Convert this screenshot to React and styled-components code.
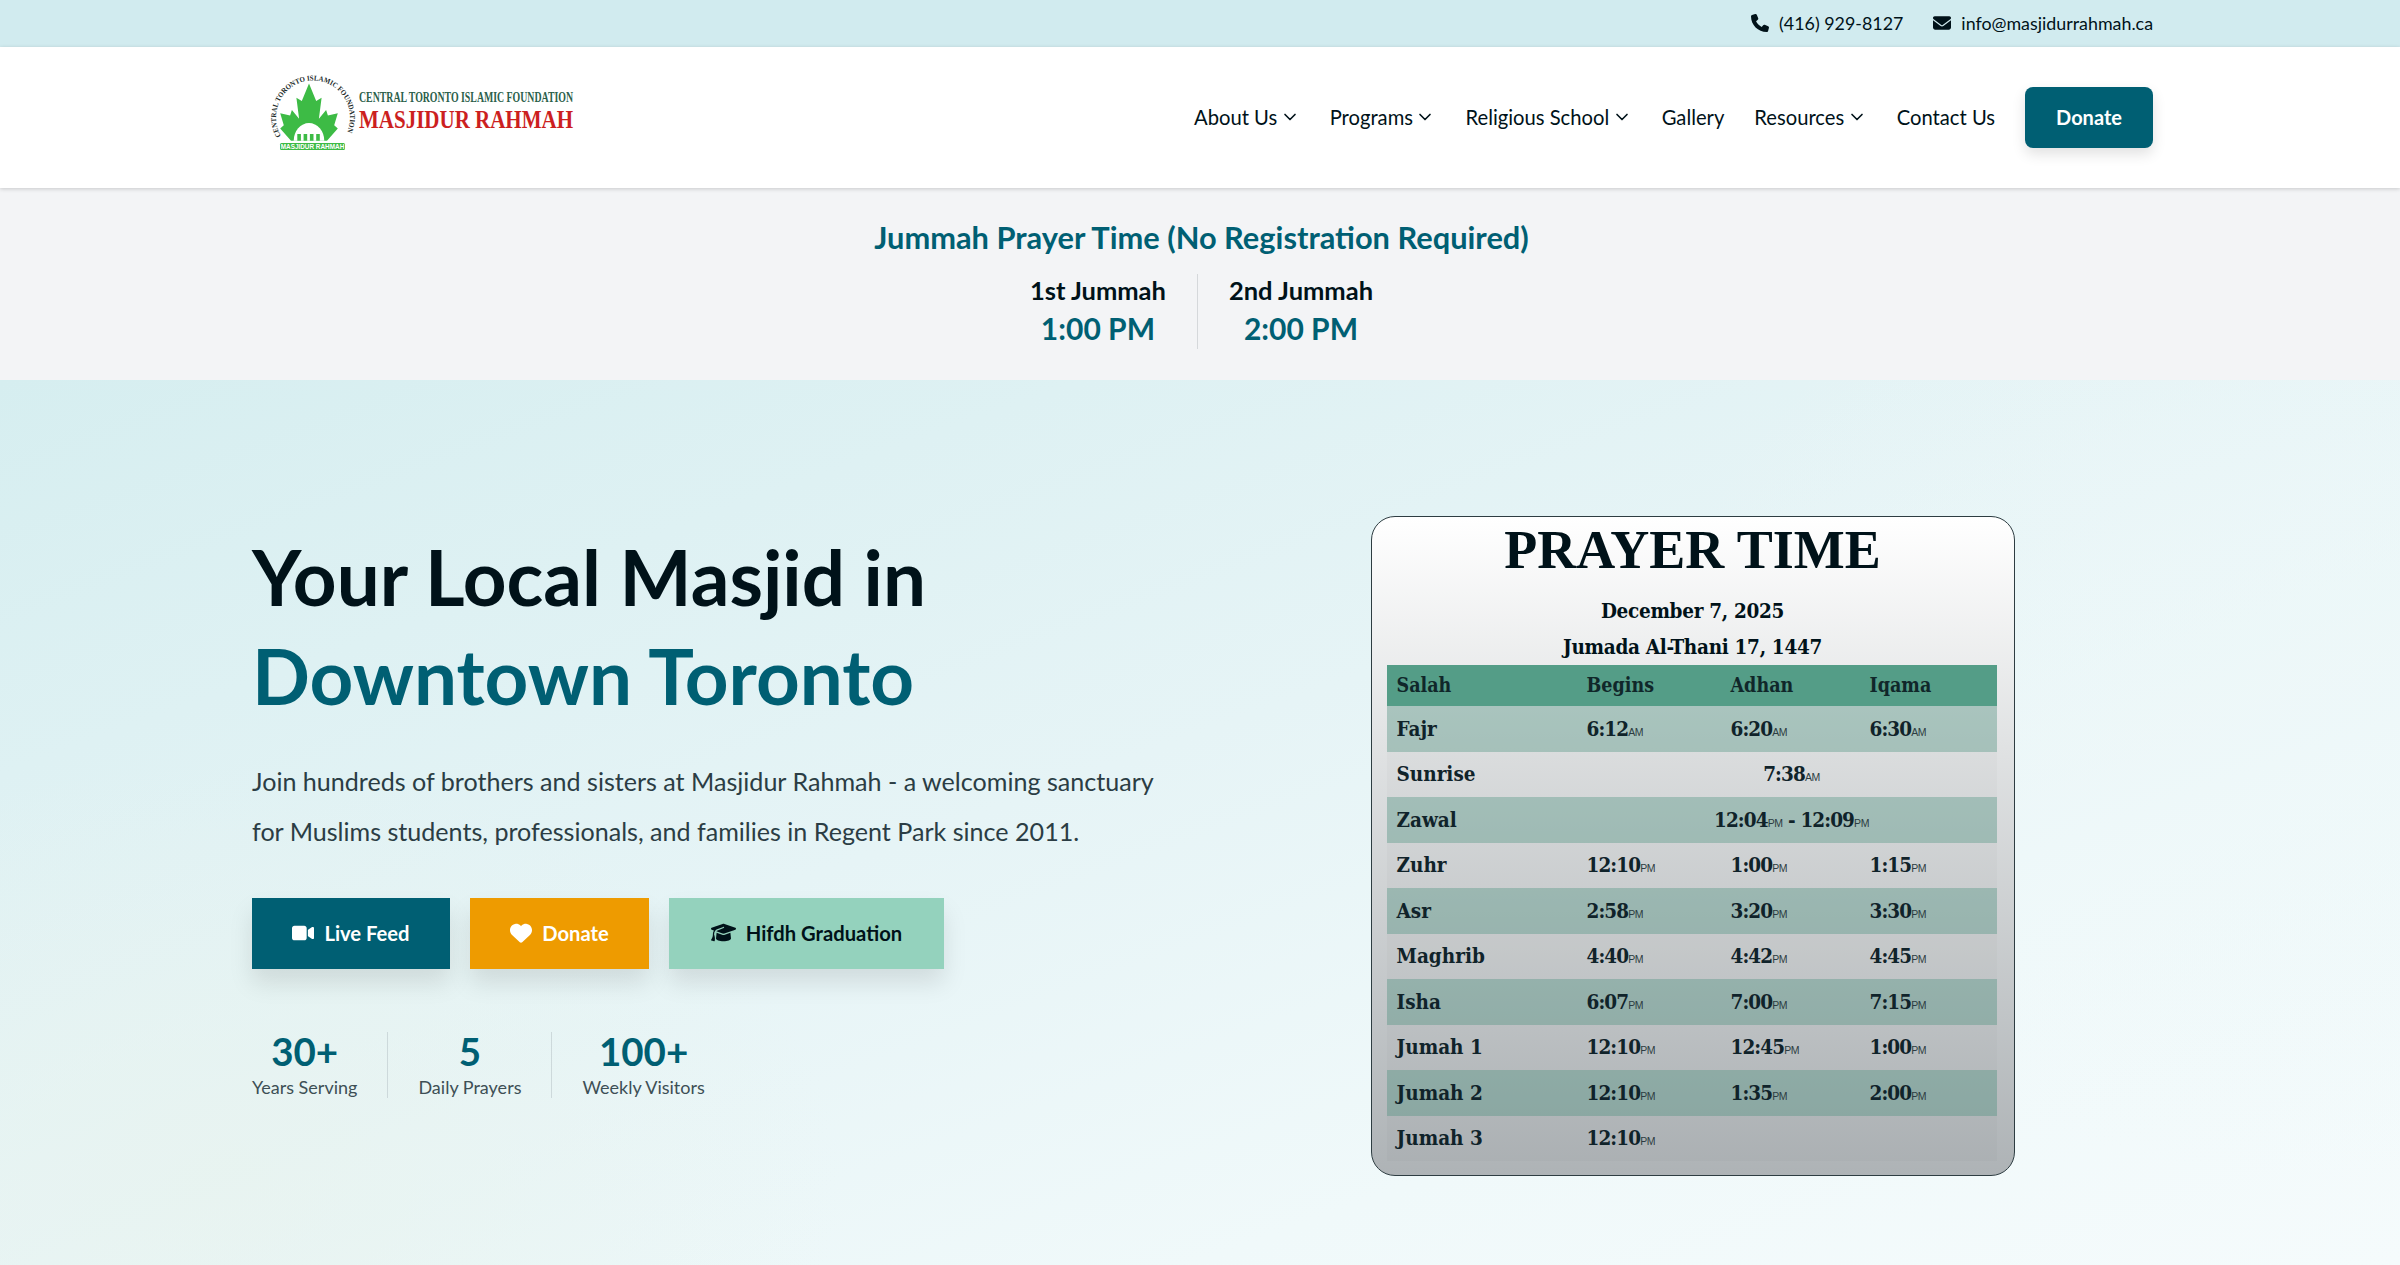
import styled, { createGlobalStyle } from "styled-components"
import { FaPhone, FaEnvelope, FaVideo, FaHeart, FaGraduationCap } from "react-icons/fa6"
import { ChevronDown } from "lucide-react"

const navLinks = [
    { label: "About Us", menu: true },
    { label: "Programs", menu: true },
    { label: "Religious School", menu: true },
    { label: "Gallery" },
    { label: "Resources", menu: true },
    { label: "Contact Us" },
]

const stats = [
    { value: "30+", label: "Years Serving" },
    { value: "5", label: "Daily Prayers" },
    { value: "100+", label: "Weekly Visitors" },
]

const prayers = [
    { name: "Fajr", times: ["6:12", "6:20", "6:30"], suffix: "AM" },
    { name: "Sunrise", span: [["7:38", "AM"]] },
    { name: "Zawal", span: [["12:04", "PM"], [" - 12:09", "PM"]] },
    { name: "Zuhr", times: ["12:10", "1:00", "1:15"], suffix: "PM" },
    { name: "Asr", times: ["2:58", "3:20", "3:30"], suffix: "PM" },
    { name: "Maghrib", times: ["4:40", "4:42", "4:45"], suffix: "PM" },
    { name: "Isha", times: ["6:07", "7:00", "7:15"], suffix: "PM" },
    { name: "Jumah 1", times: ["12:10", "12:45", "1:00"], suffix: "PM" },
    { name: "Jumah 2", times: ["12:10", "1:35", "2:00"], suffix: "PM" },
    { name: "Jumah 3", times: ["12:10"], suffix: "PM" },
]

function Logo(){
    return(
        <LogoMark width="330" height="84" viewBox="0 0 330 84">
            <defs>
                <path id="ring" d="M 19 60 A 37 37 0 1 1 83 60" />
            </defs>
            <text fontFamily="Liberation Serif" fontSize="7.4" fontWeight="700" fill="#1c2b2a" textLength="150" lengthAdjust="spacingAndGlyphs">
                <textPath href="#ring">CENTRAL TORONTO ISLAMIC FOUNDATION</textPath>
            </text>
            <g transform="translate(47 2) scale(0.9 1.1) translate(-52 -3)">
                <path fill="#3dbb45" d="M52 8 L60 24 L66 21 L63 40 L71 32 L73 37 L84 35 L80 46 L84 49 L72 60 L32 60 L20 49 L24 46 L20 35 L31 37 L33 32 L41 40 L38 21 L44 24 Z" />
                <path fill="#fff" d="M35 60 A17 16 0 0 1 69 60 Z" />
                <path fill="#3dbb45" d="M39 60 h4 v-6 h-4 Z M46 60 h4 v-6 h-4 Z M53 60 h4 v-6 h-4 Z M60 60 h4 v-6 h-4 Z" />
            </g>
            <rect x="18" y="67" width="65" height="7" rx="1.5" fill="#3dbb45" />
            <text x="50.5" y="73" textAnchor="middle" fontFamily="Liberation Sans" fontSize="6.4" fontWeight="700" fill="#fff">MASJIDUR RAHMAH</text>
            <text x="97" y="26" fontFamily="Liberation Serif" fontSize="14.5" fontWeight="700" fill="#2c5f4b" textLength="214" lengthAdjust="spacingAndGlyphs">CENTRAL TORONTO ISLAMIC FOUNDATION</text>
            <text x="97" y="52" fontFamily="Liberation Serif" fontSize="26" fontWeight="700" fill="#cc1f1f" textLength="214" lengthAdjust="spacingAndGlyphs">MASJIDUR RAHMAH</text>
        </LogoMark>
    )
}

export default function App(){
    return(
        <Page>
            <GlobalStyle />
            <TopBar>
                <TopItem><FaPhone /> (416) 929-8127</TopItem>
                <TopItem><FaEnvelope /> info@masjidurrahmah.ca</TopItem>
            </TopBar>

            <Nav>
                <Logo />
                <NavLinks>
                    {navLinks.map(link => (
                        <NavLink key={link.label}>
                            {link.label}
                            {link.menu && <ChevronDown size={20} strokeWidth={2} />}
                        </NavLink>
                    ))}
                    <NavDonate>Donate</NavDonate>
                </NavLinks>
            </Nav>

            <Jummah>
                <JummahTitle>Jummah Prayer Time (No Registration Required)</JummahTitle>
                <JummahRow>
                    <JummahSlot>
                        <JummahName>1st Jummah</JummahName>
                        <JummahTime>1:00 PM</JummahTime>
                    </JummahSlot>
                    <JummahSlot>
                        <JummahName>2nd Jummah</JummahName>
                        <JummahTime>2:00 PM</JummahTime>
                    </JummahSlot>
                </JummahRow>
            </Jummah>

            <Hero>
                <HeroText>
                    <Headline>
                        Your Local Masjid in
                        <HeadlineAccent>Downtown Toronto</HeadlineAccent>
                    </Headline>
                    <Lead>
                        Join hundreds of brothers and sisters at Masjidur Rahmah - a welcoming sanctuary
                        for Muslims students, professionals, and families in Regent Park since 2011.
                    </Lead>
                    <Actions>
                        <Action $bg="#005f73" $fg="#ffffff" $width="198px"><FaVideo /> Live Feed</Action>
                        <Action $bg="#ee9b00" $fg="#ffffff" $width="179px"><FaHeart /> Donate</Action>
                        <Action $bg="#94d2bd" $fg="#001219" $width="275px" $icon="25px"><FaGraduationCap /> Hifdh Graduation</Action>
                    </Actions>
                    <Stats>
                        {stats.map(stat => (
                            <Stat key={stat.label}>
                                <StatValue>{stat.value}</StatValue>
                                <StatLabel>{stat.label}</StatLabel>
                            </Stat>
                        ))}
                    </Stats>
                </HeroText>

                <Card>
                    <CardTitle>PRAYER TIME</CardTitle>
                    <CardDate>December 7, 2025</CardDate>
                    <CardDate>Jumada Al-Thani 17, 1447</CardDate>
                    <Table>
                        <colgroup>
                            <col width="200" />
                            <col width="144" />
                            <col width="139" />
                            <col width="127" />
                        </colgroup>
                        <thead>
                            <tr>
                                <Head>Salah</Head>
                                <Head>Begins</Head>
                                <Head>Adhan</Head>
                                <Head>Iqama</Head>
                            </tr>
                        </thead>
                        <tbody>
                            {prayers.map(prayer => (
                                <Row key={prayer.name}>
                                    <Cell>{prayer.name}</Cell>
                                    {prayer.span ? (
                                        <SpanCell colSpan={3}>
                                            {prayer.span.map(([time, suffix]) => (
                                                <span key={time}>{time}<Suffix>{suffix}</Suffix></span>
                                            ))}
                                        </SpanCell>
                                    ) : [0, 1, 2].map(i => (
                                        <TimeCell key={i}>
                                            {prayer.times[i]}
                                            {prayer.times[i] && <Suffix>{prayer.suffix}</Suffix>}
                                        </TimeCell>
                                    ))}
                                </Row>
                            ))}
                        </tbody>
                    </Table>
                </Card>
            </Hero>
        </Page>
    )
}

const GlobalStyle = createGlobalStyle`
    html, body {
        margin: 0;
        padding: 0;
    }
    body {
        font-family: "Lato", "Liberation Sans", sans-serif;
        color: #001219;
        overflow: hidden;
    }
`
const Page = styled.div`
    display: flex;
    flex-direction: column;
    height: 1265px;
`
const TopBar = styled.div`
    display: flex;
    justify-content: flex-end;
    align-items: center;
    gap: 30px;
    height: 47px;
    padding: 0 247px 2px 0;
    box-sizing: border-box;
    background: #d1ebef;
`
const TopItem = styled.div`
    display: flex;
    align-items: center;
    gap: 10px;
    font-size: 17.85px;
    svg {
        font-size: 18px;
    }
`
const Nav = styled.nav`
    position: relative;
    z-index: 2;
    display: flex;
    justify-content: space-between;
    align-items: center;
    height: 141px;
    padding: 0 247px 0 262px;
    background: #ffffff;
    box-shadow: 0 1px 4px rgba(0, 0, 0, 0.18);
`
const LogoMark = styled.svg`
    flex-shrink: 0;
    overflow: visible;
`
const NavLinks = styled.div`
    display: flex;
    align-items: center;
    gap: 30px;
`
const NavLink = styled.a`
    display: flex;
    align-items: center;
    gap: 2.5px;
    padding-bottom: 2px;
    font-size: 20.2px;
    color: #001219;
`
const NavDonate = styled.button`
    width: 128px;
    height: 61px;
    padding: 0 0 2px;
    border: none;
    border-radius: 8px;
    background: #005f73;
    color: #ffffff;
    font-family: inherit;
    font-size: 20px;
    font-weight: 700;
    box-shadow: 0 6px 14px rgba(0, 0, 0, 0.12);
`
const Jummah = styled.section`
    display: flex;
    flex-direction: column;
    align-items: center;
    height: 192px;
    box-sizing: border-box;
    padding: 30px 0 0 3px;
    background: #f3f4f6;
`
const JummahTitle = styled.h2`
    margin: 0 0 16px;
    font-size: 30.8px;
    line-height: 40px;
    font-weight: 700;
    color: #005f73;
`
const JummahRow = styled.div`
    display: flex;
`
const JummahSlot = styled.div`
    display: flex;
    flex-direction: column;
    align-items: center;
    padding: 0 31px;
    & + & {
        border-left: 1px solid #d5d8db;
    }
`
const JummahName = styled.div`
    font-size: 25.5px;
    line-height: 32px;
    font-weight: 700;
`
const JummahTime = styled.div`
    margin-top: 1px;
    font-size: 30px;
    line-height: 42px;
    font-weight: 700;
    color: #005f73;
`
const Hero = styled.section`
    flex: 1;
    display: grid;
    grid-template-columns: 921px 921px;
    justify-content: space-between;
    padding: 136px 247px 0 252px;
    background:
        radial-gradient(ellipse 620px 420px at 220px 800px, rgba(232, 243, 238, 0.7), transparent),
        radial-gradient(ellipse 700px 500px at 2350px 300px, rgba(238, 248, 249, 0.6), transparent),
        linear-gradient(160deg, #d6eef0 0%, #e6f4f6 45%, #f0f9fa 75%, #f5fbfc 100%);
`
const HeroText = styled.div`
    display: flex;
    flex-direction: column;
    align-items: flex-start;
    padding-top: 11px;
`
const Headline = styled.h1`
    margin: 0;
    font-size: 76.3px;
    line-height: 99px;
    font-weight: 700;
`
const HeadlineAccent = styled.span`
    display: block;
    color: #005f73;
`
const Lead = styled.p`
    width: 915px;
    margin: 31px 0 0;
    font-size: 25.1px;
    line-height: 50px;
    color: #2b3d44;
`
const Actions = styled.div`
    display: flex;
    gap: 20px;
    margin-top: 42px;
`
const Action = styled.a`
    display: flex;
    justify-content: center;
    align-items: center;
    gap: 10px;
    width: ${props => props.$width};
    height: 71px;
    padding-bottom: 2px;
    box-sizing: border-box;
    background: ${props => props.$bg};
    color: ${props => props.$fg};
    font-size: 20.2px;
    font-weight: 700;
    box-shadow: 0 14px 24px rgba(0, 0, 0, 0.1);
    svg {
        font-size: ${props => props.$icon || "22px"};
    }
`
const Stats = styled.div`
    display: flex;
    margin-top: 63px;
`
const Stat = styled.div`
    display: flex;
    flex-direction: column;
    align-items: center;
    padding: 0 30px;
    &:first-child {
        padding-left: 0;
    }
    & + & {
        border-left: 1px solid #cdd9db;
    }
`
const StatValue = styled.div`
    font-size: 38.5px;
    line-height: 38px;
    font-weight: 700;
    color: #005f73;
`
const StatLabel = styled.div`
    margin-top: 6px;
    font-size: 18px;
    line-height: 22px;
    color: #3d4f55;
`
const Card = styled.div`
    justify-self: center;
    align-self: start;
    box-sizing: border-box;
    width: 644px;
    height: 660px;
    padding: 0 15px;
    border: 1px solid #2e3d42;
    border-radius: 24px;
    background: linear-gradient(180deg, #ffffff 0%, #e0e2e3 35%, #aeb3b6 100%);
    text-align: center;
`
const CardTitle = styled.div`
    font-family: "Liberation Serif", serif;
    font-size: 54px;
    line-height: 66px;
    font-weight: 700;
`
const CardDate = styled.div`
    font-family: "DejaVu Serif Condensed", "DejaVu Serif", serif;
    font-size: 20.5px;
    line-height: 36px;
    font-weight: 700;
    letter-spacing: -0.3px;
    &:nth-child(2) {
        margin-top: 10px;
    }
`
const Table = styled.table`
    width: 610px;
    border-collapse: collapse;
    table-layout: fixed;
    text-align: left;
    font-family: "DejaVu Serif Condensed", "DejaVu Serif", serif;
    font-weight: 700;
`
const Head = styled.th`
    height: 41px;
    padding: 0 0 0 10px;
    background: #549d87;
    font-size: 19.5px;
    font-weight: 700;
    color: #10272a;
    &:not(:first-child) {
        padding-left: 0;
    }
`
const Row = styled.tr`
    height: 45.5px;
    background: rgba(0, 0, 0, 0.02);
    &:nth-child(odd) {
        background: rgba(70, 140, 120, 0.38);
    }
`
const Cell = styled.td`
    padding: 0 0 0 10px;
    font-size: 20.5px;
    color: #10232a;
`
const TimeCell = styled.td`
    padding: 0;
    font-size: 20.5px;
    letter-spacing: -0.9px;
    color: #10232a;
`
const SpanCell = styled(TimeCell)`
    text-align: center;
`
const Suffix = styled.span`
    font-family: "Liberation Sans", sans-serif;
    font-size: 10.5px;
    font-weight: 400;
    letter-spacing: -0.4px;
    color: #2c3c42;
`
